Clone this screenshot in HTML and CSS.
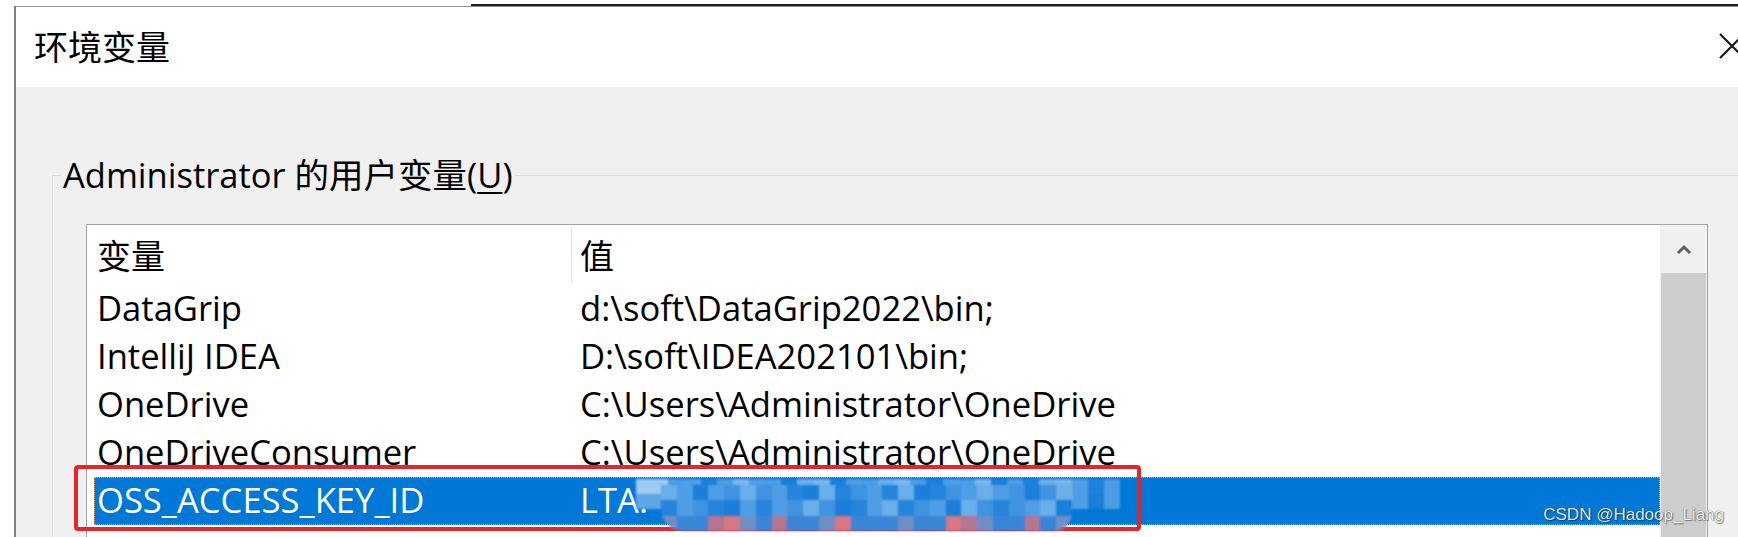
FILE: index.html
```html
<!DOCTYPE html>
<html lang="zh-CN">
<head>
<meta charset="utf-8">
<title>环境变量</title>
<link rel="stylesheet" href="styles.css">
</head>
<body>
<div class="backdrop"></div>
<div class="window">
  <div class="titlebar">
    <span class="title">环境变量</span>
    <svg class="close" width="26" height="26" viewBox="0 0 26 26"><path d="M1 1L25 25M25 1L1 25" fill="none" stroke="#1a1a1a" stroke-width="2.2"/></svg>
  </div>
  <div class="client">
    <fieldset class="group">
      <legend>Administrator 的用户变量(<u>U</u>)</legend>
      <div class="list">
        <div class="table">
          <div class="head"><div class="hcell hname">变量</div><div class="hcell hvalue">值</div></div>
          <div class="row"><div class="cell name">DataGrip</div><div class="cell value">d:\soft\DataGrip2022\bin;</div></div>
          <div class="row"><div class="cell name">IntelliJ IDEA</div><div class="cell value">D:\soft\IDEA202101\bin;</div></div>
          <div class="row"><div class="cell name">OneDrive</div><div class="cell value">C:\Users\Administrator\OneDrive</div></div>
          <div class="row"><div class="cell name">OneDriveConsumer</div><div class="cell value">C:\Users\Administrator\OneDrive</div></div>
          <div class="row selected">
            <div class="cell name">OSS_ACCESS_KEY_ID</div>
            <div class="cell value">LTA.
              <div class="mz mz-top"><i></i><i></i><i></i><i></i><i></i><i></i><i></i><i></i><i></i><i></i><i></i><i></i><i></i><i></i><i></i><i></i><i></i><i></i><i></i><i></i><i></i><i></i><i></i><i></i><i></i><i></i><i></i><i></i><i></i><i></i><i></i><i></i><i></i><i></i><i></i><i></i><i></i><i></i><i></i><i></i><i></i><i></i><i></i><i></i><i></i><i></i><i></i><i></i><i></i><i></i><i></i><i></i><i></i><i></i><i></i><i></i><i></i><i></i><i></i><i></i></div>
              <div class="mz mz-band"><i></i><i></i><i></i><i></i><i></i><i></i><i></i><i></i><i></i><i></i><i></i><i></i><i></i><i></i><i></i><i></i><i></i><i></i><i></i><i></i><i></i><i></i><i></i><i></i><i></i><i></i><i></i><i></i><i></i><i></i><i></i><i></i><i></i><i></i><i></i><i></i><i></i><i></i><i></i><i></i><i></i><i></i><i></i><i></i><i></i><i></i><i></i><i></i><i></i><i></i><i></i><i></i><i></i><i></i><i></i><i></i><i></i><i></i><i></i><i></i><i></i><i></i><i></i><i></i><i></i><i></i><i></i><i></i><i></i><i></i><i></i><i></i><i></i><i></i><i></i><i></i><i></i><i></i></div>
            </div>
          </div>
          <div class="row"><div class="cell name"></div><div class="cell value"></div></div>
        </div>
        <div class="scrollbar">
          <div class="sb-up"><svg width="16" height="11" viewBox="0 0 16 11"><polyline points="2,9 8,3 14,9" fill="none" stroke="#606060" stroke-width="3"/></svg></div>
          <div class="sb-thumb"></div>
        </div>
      </div>
    </fieldset>
  </div>
</div>
<div class="watermark">CSDN @Hadoop_Liang</div>
</body>
</html>
```
FILE: styles.css
```css
html, body {
  margin: 0;
  padding: 0;
  background: #ffffff;
  overflow: hidden;
  height: 537px;
}
body {
  font-family: "Open Sans", "Noto Sans CJK SC", sans-serif;
  color: #000;
  position: relative;
}
.backdrop {
  height: 6px;
  background: linear-gradient(to right, transparent 471px, #1e1e1e 471px) bottom / 100% 2px no-repeat;
}
.window {
  margin-left: 14px;
  width: 1800px;
  border-left: 2px solid #808080;
  border-top: 1px solid #8c8c8c;
  background: #f0f0f0;
  height: 600px;
}
.titlebar {
  height: 80px;
  background: #ffffff;
  display: flex;
  align-items: flex-start;
  padding-left: 18px;
  padding-right: 71px;
}
.title {
  font-family: "Noto Sans CJK SC", sans-serif;
  font-size: 34px;
  line-height: 40px;
  margin-top: 19px;
  white-space: nowrap;
  flex: none;
}
.close {
  margin-left: auto;
  margin-top: 26px;
  flex: none;
}
.client {
  background: #f0f0f0;
}
.group {
  margin: 68px 0 0 36px;
  padding: 0;
  width: 1800px;
  border: 1px solid #dcdcdc;
  min-width: 0;
}
.group legend {
  font-size: 34.5px;
  line-height: 40px;
  margin-left: 8px;
  padding: 0 2px;
  white-space: nowrap;
}
.group legend u {
  text-decoration-thickness: 2px;
  text-underline-offset: 4px;
}
.list {
  margin: 29px 0 0 33px;
  width: 1620px;
  border: 1px solid #a3a3a3;
  background: #ffffff;
  display: flex;
  height: 400px;
}
.table {
  flex: 1;
  font-size: 34.6px;
}
.head {
  display: flex;
  height: 60px;
}
.hcell {
  margin-top: 1px;
  height: 57px;
  line-height: 58px;
  font-family: "Noto Sans CJK SC", sans-serif;
  font-size: 34px;
}
.hname {
  width: 474px;
  padding-left: 10px;
  border-right: 1px solid #e5e5e5;
}
.hvalue {
  padding-left: 8px;
}
.row {
  display: flex;
  height: 48px;
  line-height: 46px;
  margin-left: 7px;
  position: relative;
  white-space: nowrap;
}
.cell.name {
  width: 475px;
  padding-left: 3px;
}
.cell.value {
  flex: 1;
  padding-left: 8px;
  position: relative;
}
.row.selected {
  background: #0078d7;
  color: #ffffff;
  outline: 1px dotted #e0a060;
  outline-offset: -1px;
}
.row.selected::after {
  content: "";
  position: absolute;
  left: -20px;
  top: -12px;
  width: 1067px;
  height: 66px;
  box-sizing: border-box;
  border: 4px solid #e4252c;
  border-radius: 4px;
  z-index: 1;
}
.mz {
  position: absolute;
  display: grid;
  z-index: 2;
  filter: blur(0.8px);
}
.mz-top {
  left: 64px;
  top: 2px;
  width: 484px;
  height: 30px;
  grid-template-columns: repeat(30, 1fr);
  grid-template-rows: repeat(2, 1fr);
}
.mz-band {
  left: 89px;
  top: 8px;
  width: 411px;
  height: 46px;
  grid-template-columns: repeat(26, 1fr);
  grid-template-rows: repeat(3, 1fr);
  border-radius: 0 0 18px 22px;
  overflow: hidden;
}
.mz i { background: #3f93e0; }
.mz i:nth-child(2n) { background: #4f9de4; }
.mz i:nth-child(3n) { background: #2584dc; }
.mz i:nth-child(5n+1) { background: #6aaeea; }
.mz i:nth-child(7n+3) { background: #1b7ed8; }
.mz-top i { background: #1f80da; }
.mz-top i:nth-child(3n) { background: #4c9be3; }
.mz-top i:nth-child(5n+2) { background: #7ab6ec; }
.mz-top i:nth-child(-n+2) { background: #9ec9f0; }
.mz-top i:nth-child(31), .mz-top i:nth-child(32) { background: #5ea5e6; }
.mz-band i:nth-child(n+53) { background: #3a86d6; }
.mz-band i:nth-child(n+53):nth-child(4n) { background: #b57591; }
.mz-band i:nth-child(n+53):nth-child(7n+1) { background: #d77684; }
.mz-band i:nth-child(n+53):nth-child(5n+3) { background: #6f8fc4; }
.scrollbar {
  width: 47px;
  background: #f0f0f0;
  display: flex;
  flex-direction: column;
}
.sb-up {
  height: 48px;
  display: flex;
  align-items: center;
  justify-content: center;
}
.sb-thumb {
  flex: 1;
  margin: 0 1px;
  background: #cdcdcd;
}
.watermark {
  position: absolute;
  right: 14px;
  top: 505px;
  font-family: "Liberation Sans", Arial, sans-serif;
  font-size: 17px;
  color: rgba(255, 255, 255, 0.92);
  text-shadow: 0 0 1px rgba(0, 0, 0, 0.7), 1px 1px 1px rgba(0, 0, 0, 0.35);
  z-index: 5;
}
```
